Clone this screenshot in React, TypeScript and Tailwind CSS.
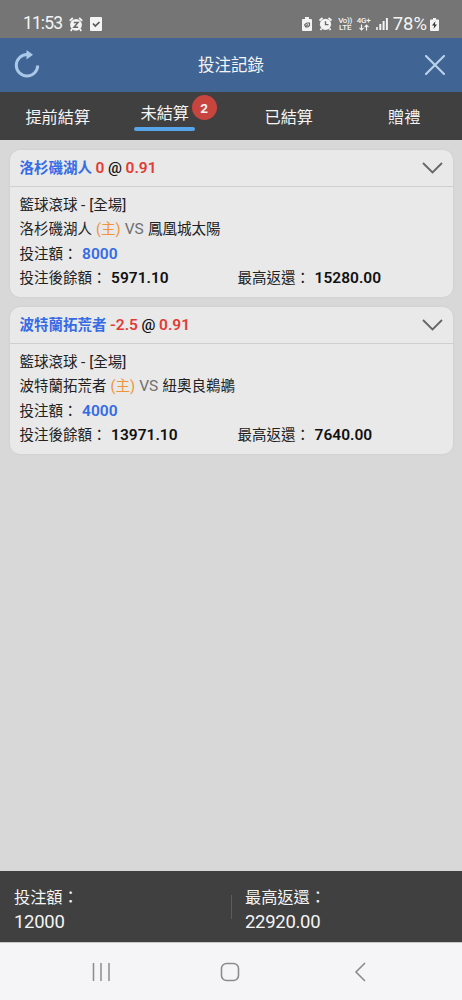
import React from 'react'

interface Bet {
  pick: string
  line: string
  odds: string
  home: string
  away: string
  stake: string
  balance: string
  maxReturn: string
}

const bets: Bet[] = [
  {
    pick: '洛杉磯湖人',
    line: '0',
    odds: '0.91',
    home: '洛杉磯湖人',
    away: '鳳凰城太陽',
    stake: '8000',
    balance: '5971.10',
    maxReturn: '15280.00',
  },
  {
    pick: '波特蘭拓荒者',
    line: '-2.5',
    odds: '0.91',
    home: '波特蘭拓荒者',
    away: '紐奧良鵜鶘',
    stake: '4000',
    balance: '13971.10',
    maxReturn: '7640.00',
  },
]

const StatusBar: React.FC = () => (
  <div className="flex h-[38px] items-center bg-[#757575] pl-[23px] pr-[23px] pt-[10px] text-[17.500px] leading-none text-[#f4f4f4]">
    <span className="w-[39px] tracking-[-0.900px]">11:53</span>
    <svg className="ml-[7px] h-[15px] w-[14px]" viewBox="0 0 14 15">
      <path d="M.8 3.800 3.800 1M13.200 3.800 10.200 1M3 12l-1.200 2M11 12l1.200 2" stroke="#f4f4f4" strokeWidth="1.800" />
      <circle cx="7" cy="7.800" r="5.900" fill="#f4f4f4" />
      <path d="M4.800 5.500H9L5 10.200h4.200" fill="none" stroke="#686868" strokeWidth="1.500" />
    </svg>
    <svg className="ml-[7px] h-[14px] w-3" viewBox="0 0 12 14">
      <rect width="12" height="14" rx="1" fill="#f4f4f4" />
      <path d="m3 6.500 2.300 2.500L9.500 5" fill="none" stroke="#555" strokeWidth="1.700" />
    </svg>

    <svg className="ml-auto h-[14px] w-[10px]" viewBox="0 0 10 14">
      <path d="M3 0h4v2h2a1 1 0 0 1 1 1v10a1 1 0 0 1-1 1H1a1 1 0 0 1-1-1V3a1 1 0 0 1 1-1h2z" fill="#f4f4f4" />
      <path d="M2.800 9V7.500L5 6h2.500v2.500L6 10H3.500M3 10l3-2.500" fill="none" stroke="#686868" strokeWidth="1.200" />
    </svg>
    <svg className="ml-[7px] h-[14px] w-[13px]" viewBox="0 0 13 14">
      <path d="M.5 3.500 3.500 1M12.500 3.500 9.500 1M2.500 11.500l-1 1.500M10.500 11.500l1 1.500" stroke="#f4f4f4" strokeWidth="1.900" />
      <circle cx="6.500" cy="7.300" r="5.600" fill="#f4f4f4" />
      <path d="M6.500 4.300v3.300h3" fill="none" stroke="#686868" strokeWidth="1.400" />
    </svg>
    <div className="ml-[7px] flex w-[13px] flex-col items-center text-[8px] font-medium leading-[7px]">
      <span className="tracking-[-0.300px]">Vo))</span>
      <span className="tracking-[-0.200px]">LTE</span>
    </div>
    <div className="ml-[5px] flex w-[14px] flex-col items-center text-[8px] font-medium leading-[7px]">
      <span className="tracking-[-0.200px]">4G+</span>
      <svg className="h-[7px] w-[10px]" viewBox="0 0 10 7" fill="none" stroke="#f4f4f4" strokeWidth="1.200">
        <path d="M2.500.5v5M.5 3.800l2 2 2-2M7.500 6.500v-5M5.500 3.200l2-2 2 2" />
      </svg>
    </div>
    <svg className="ml-[5px] h-[12px] w-[12px]" viewBox="0 0 12 12" fill="#f4f4f4">
      <rect x="0" y="9" width="2" height="3" fillOpacity=".8" />
      <rect x="3.300" y="6" width="2" height="6" />
      <rect x="6.600" y="3" width="2" height="9" />
      <rect x="9.900" y="0" width="2" height="12" />
    </svg>
    <span className="ml-[5px] text-[18.500px]">78%</span>
    <svg className="ml-[3px] h-[13px] w-[9px]" viewBox="0 0 9 13">
      <path d="M3 0h3v1.500h2a1 1 0 0 1 1 1V12a1 1 0 0 1-1 1H1a1 1 0 0 1-1-1V2.500a1 1 0 0 1 1-1h2z" fill="#f4f4f4" />
      <path d="M5.500 3 2 7.500h2.200L3.500 11 7 6.500H4.800z" fill="#333" />
    </svg>
  </div>
)

const Header: React.FC = () => (
  <header className="flex h-[54px] items-center justify-between bg-[#406493] pl-[14px] pr-[17px]">
    <svg className="mb-[3px] h-[28px] w-[26px]" viewBox="0 0 26 28">
      <path d="M15 4.600H13A10.700 10.700 0 1 0 23.700 15.500" fill="none" stroke="#aac8e8" strokeWidth="3" />
      <path d="M12.500 0v9.500l6.500-4.800z" fill="#aac8e8" />
    </svg>
    <h1 className="-ml-[3px] pt-[2px] text-[16.500px] text-[#f4f4f4]">投注記錄</h1>
    <svg className="h-5 w-5" viewBox="0 0 20 20">
      <path d="m1 1 18 18M19 1 1 19" stroke="#b9d1ea" strokeWidth="2.200" strokeLinecap="round" />
    </svg>
  </header>
)

const Tabs: React.FC = () => (
  <nav className="grid h-[48px] grid-cols-4 bg-[#404040] text-[16.200px] leading-6 text-[#f4f4f4]">
    <div className="flex items-center justify-center pt-[3px]">提前結算</div>
    <div className="relative flex flex-col items-center pt-[10px]">
      <div className="-ml-[17px]">未結算</div>
      <div className="-ml-[17px] mt-px h-1 w-[61px] rounded-sm bg-[#57a5e8]" />
      <span className="absolute left-[76px] top-[3px] flex size-[25px] items-center justify-center rounded-full bg-[#c8443f] text-[13.500px] font-bold">
        2
      </span>
    </div>
    <div className="flex items-center justify-center pt-[3px]">已結算</div>
    <div className="flex items-center justify-center pt-[3px]">贈禮</div>
  </nav>
)

// Digits are set slightly larger than the Chinese text around them
const Amount: React.FC<{ className: string; children: React.ReactNode }> = ({ className, children }) => (
  <b className={`text-[15.500px] font-semibold leading-none ${className}`}>{children}</b>
)

const BetCard: React.FC<{ bet: Bet }> = ({ bet }) => (
  <article className="h-[147px] rounded-[10px] bg-[#e9e9e9] text-[14.500px] text-[#222] shadow-[0_0_3px_rgba(0,0,0,0.06)]">
    <div className="flex h-[37px] items-center justify-between border-b border-[#cfcfcf] pl-[9.500px] pr-[10px]">
      <div className="pt-[2px] font-bold text-[#356be4]">
        {bet.pick} <Amount className="text-[#e23b35]">{bet.line}</Amount>{' '}
        <span className="text-[15.500px] font-medium leading-none text-[#111]">@</span>{' '}
        <Amount className="text-[#e23b35]">{bet.odds}</Amount>
      </div>
      <svg className="h-3 w-[21px]" viewBox="0 0 21 12">
        <path d="m1 1 9.500 9.500L20 1" fill="none" stroke="#666" strokeWidth="1.800" />
      </svg>
    </div>
    <div className="px-[9.500px] pt-[6.500px] leading-[24.500px]">
      <p>
        籃球滾球 <span className="text-[15.500px] leading-none">- [</span>全場
        <span className="text-[15.500px] leading-none">]</span>
      </p>
      <p className="[word-spacing:0.500px]">
        {bet.home} <span className="text-[#ed953d]">(主)</span>{' '}
        <span className="text-[15.500px] leading-none text-[#707070]">VS</span> {bet.away}
      </p>
      <p className="[word-spacing:1px]">
        投注額： <Amount className="text-[#356be4]">{bet.stake}</Amount>
      </p>
      <div className="grid grid-cols-[218px_1fr] [word-spacing:1px]">
        <p>
          投注後餘額： <Amount className="text-[#111]">{bet.balance}</Amount>
        </p>
        <p>
          最高返還： <Amount className="text-[#111]">{bet.maxReturn}</Amount>
        </p>
      </div>
    </div>
  </article>
)

const Summary: React.FC = () => (
  <footer className="flex h-[71px] items-center bg-[#404040] text-[16.200px] leading-[24px] text-[#f4f4f4]">
    <div className="w-[231px] pl-[14px] pt-[6px]">
      <p>投注額：</p>
      <p className="text-[18.500px] tracking-[-0.300px]">12000</p>
    </div>
    <div className="h-6 w-px bg-[#5c5c5c]" />
    <div className="pl-[13px] pt-[6px]">
      <p>最高返還：</p>
      <p className="text-[18.500px] tracking-[-0.300px]">22920.00</p>
    </div>
  </footer>
)

const NavBar: React.FC = () => (
  <div className="flex h-[58px] items-center justify-between border-t border-[#c8c8c8] bg-[#f5f5f7] pl-[92px] pr-[96px] pt-px">
    <svg className="h-[18px] w-[18px]" viewBox="0 0 18 18">
      <path d="M1.500 0v18M9 0v18M17 0v18" stroke="#8c8c8e" strokeWidth="1.500" />
    </svg>
    <svg className="-ml-[4px] h-5 w-5" viewBox="0 0 20 20">
      <rect x="1.500" y="1.500" width="17" height="17" rx="5" fill="none" stroke="#8c8c8e" strokeWidth="1.600" />
    </svg>
    <svg className="h-5 w-3" viewBox="0 0 12 20">
      <path d="M11 1 2 10l9 9" fill="none" stroke="#8c8c8e" strokeWidth="1.600" />
    </svg>
  </div>
)

const App: React.FC = () => {
  return (
    <div
      lang="zh-Hant"
      className="flex h-[1000px] w-[462px] flex-col overflow-hidden bg-[#d8d8d8] font-[Roboto,'Noto_Sans_CJK_TC',sans-serif]"
    >
      <StatusBar />
      <Header />
      <Tabs />
      <main className="flex flex-1 flex-col gap-[10px] pl-[10px] pr-[9px] pt-[10px]">
        {bets.map((bet) => (
          <BetCard key={bet.pick} bet={bet} />
        ))}
      </main>
      <Summary />
      <NavBar />
    </div>
  )
}

export default App
